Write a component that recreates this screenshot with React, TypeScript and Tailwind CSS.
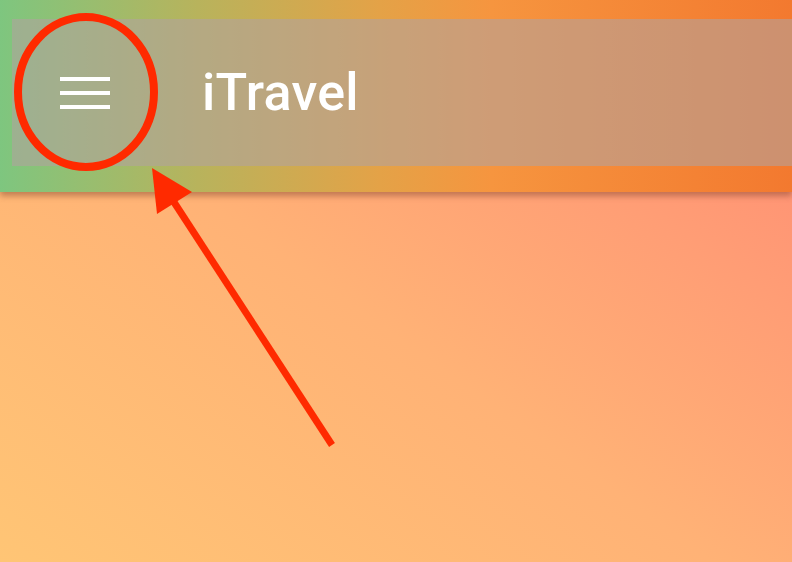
import React from 'react'

function MenuIcon() {
  return (
    <div className="flex flex-col gap-[10px] w-[50px]">
      <span className="block h-[4px] bg-white" />
      <span className="block h-[4px] bg-white" />
      <span className="block h-[4px] bg-white" />
    </div>
  )
}

export default function App() {
  return (
    <div
      className="relative w-full h-[562px] flex flex-col overflow-hidden bg-[linear-gradient(to_top_right,#ffc575,#ffb276_45%,#ff8874)]"
      style={{ fontFamily: 'Roboto, "Noto Sans", sans-serif' }}
    >
      {/* Toolbar */}
      <header className="h-[192px] pt-[19px] pl-[12px] shrink-0 bg-[linear-gradient(to_right,#7ec67f,#b8b35c_25%,#e4a247_48%,#f6953f_62%,#f3792f)] shadow-[0_4px_6px_rgba(120,60,40,0.45)]">
        <div className="h-[147px] flex items-center bg-[rgba(178,162,158,0.58)]">
          <button className="ml-[48px] h-[60px] flex items-center">
            <MenuIcon />
          </button>
          <h1 className="ml-[92px] text-white text-[52px] font-medium tracking-[0.3px]">iTravel</h1>
        </div>
      </header>

      {/* Annotation overlay */}
      <svg className="absolute inset-0 pointer-events-none" width="792" height="562" viewBox="0 0 792 562">
        <ellipse cx="86" cy="92" rx="68" ry="75" fill="none" stroke="#ff2a00" strokeWidth="8" />
        <line x1="332" y1="445" x2="170" y2="196" stroke="#ff2a00" strokeWidth="7" />
        <polygon points="152,168 157,214 192,192" fill="#ff2a00" />
      </svg>
    </div>
  )
}
